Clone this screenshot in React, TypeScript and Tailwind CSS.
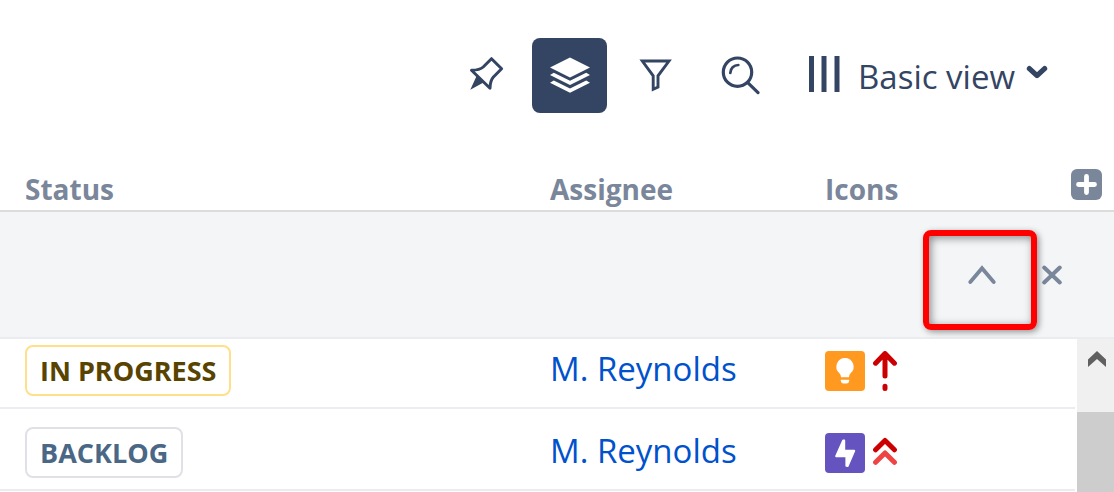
import type { ReactNode } from 'react'

type Kind = 'idea' | 'epic'

interface Issue {
  id: string
  status: string
  badgeClass: string
  assignee: string
  kind: Kind
}

const ISSUES: Issue[] = [
  { id: '1', status: 'IN PROGRESS', badgeClass: 'border-[#ffe08a] text-[#594300]', assignee: 'M. Reynolds', kind: 'idea' },
  { id: '2', status: 'BACKLOG', badgeClass: 'border-[#dfe1e6] text-[#4a6785]', assignee: 'M. Reynolds', kind: 'epic' },
]

function PinIcon() {
  return (
    <svg width="40" height="40" viewBox="0 0 40 40" fill="none">
      <path d="M6.5 14.2Q14.5 14.3 18.2 11L26.5 2.7L36.6 12.7L28.2 21.2Q25.2 24.5 25 32.3Z" stroke="currentColor" strokeWidth="3" strokeLinejoin="round" />
      <path d="M11.8 19.5L18.5 26.5L5.3 33.7Z" fill="currentColor" />
    </svg>
  )
}

function LayersIcon() {
  return (
    <svg width="40" height="38" viewBox="0 0 40 38" fill="currentColor">
      <path d="M20 .4L40 10.4L20 20.4L0 10.4Z" />
      <path d="M0 18L3.8 15.8L20 23.8L36.2 15.8L40 18L20 28Z" />
      <path d="M0 25.7L3.8 23.4L20 31.5L36.2 23.4L40 25.7L20 35.8Z" />
    </svg>
  )
}

function FilterIcon() {
  return (
    <svg width="40" height="40" viewBox="0 0 40 40" fill="none">
      <path d="M7.3 5H34L23 19.8V31L18.2 33.3V19.8Z" stroke="currentColor" strokeWidth="2.9" />
    </svg>
  )
}

function SearchIcon() {
  return (
    <svg width="40" height="40" viewBox="0 0 40 40" fill="none" stroke="currentColor" strokeWidth="3.2" strokeLinecap="round">
      <circle cx="17.5" cy="16.2" r="14.2" />
      <path d="M10.3 16.9A8 8 0 0 1 18.3 9" strokeWidth="2.7" />
      <path d="M28 26.8L38 36.6" />
    </svg>
  )
}

function IdeaIcons() {
  return (
    <>
      <svg width="40" height="40" viewBox="0 0 40 40">
        <rect width="40" height="40" rx="4" fill="#ff991f" />
        <path d="M20 7A8.7 8.7 0 0 0 14.4 22.3Q16 23.8 16 26.2H24Q24 23.8 25.6 22.3A8.7 8.7 0 0 0 20 7Z" fill="#fff" />
        <path d="M15.8 28.8H24.2V29.5Q24 32.5 21.5 32.5H18.5Q16 32.5 15.8 29.5Z" fill="#fff" />
      </svg>
      <svg width="24" height="40" viewBox="0 0 24 40" fill="none" stroke="#cc0000" strokeWidth="5" strokeLinecap="round" strokeLinejoin="round">
        <path d="M2.6 12.2L12 2.6L21.4 12.2M12 3.5V25M12 35.2V37.4" />
      </svg>
    </>
  )
}

function EpicIcons() {
  return (
    <>
      <svg width="40" height="40" viewBox="0 0 40 40">
        <rect width="40" height="40" rx="4" fill="#6554c0" />
        <path d="M18.2 7.4L19.2 7.6V17.8H29.2L22.6 33L21.4 32.8V23.2H11.2Z" fill="#fff" stroke="#fff" strokeWidth="2" strokeLinejoin="round" />
      </svg>
      <svg width="24" height="40" viewBox="0 0 24 40" fill="none" strokeWidth="5" strokeLinecap="round" strokeLinejoin="round">
        <path d="M2.6 29.3L12 20L21.4 29.3" stroke="#ef4444" />
        <path d="M2.6 16.8L12 7.4L21.4 16.8" stroke="#cc0000" />
      </svg>
    </>
  )
}

function ToolButton({ label, active, children }: { label: string; active?: boolean; children: ReactNode }) {
  return (
    <button
      type="button"
      aria-label={label}
      className={`flex size-[75px] items-center justify-center rounded-lg ${active ? 'bg-[#344563] text-white' : 'text-[#344563]'}`}
    >
      {children}
    </button>
  )
}

function Toolbar() {
  return (
    <div className="flex items-center justify-end gap-[10px] pt-[38px] pr-[66px] text-[#344563]">
      <ToolButton label="Pin"><PinIcon /></ToolButton>
      <ToolButton label="Group" active><LayersIcon /></ToolButton>
      <ToolButton label="Filter"><FilterIcon /></ToolButton>
      <ToolButton label="Search"><SearchIcon /></ToolButton>
      <label className="flex items-center pl-[22px]">
        <svg width="31" height="40" viewBox="0 0 31 40" fill="currentColor" className="mr-[18px]">
          <rect width="5" height="36" />
          <rect x="12.5" width="5" height="36" />
          <rect x="25.5" width="5" height="36" />
        </svg>
        <select aria-label="View" className="appearance-none bg-transparent pt-[3px] text-[33px] leading-[44px]">
          <option>Basic view</option>
        </select>
        <svg width="22" height="14" viewBox="0 0 22 14" fill="none" className="mb-2 ml-[10px]">
          <path d="M3.4 3.6L11 10.6L18.6 3.6" stroke="currentColor" strokeWidth="5.2" strokeLinecap="round" strokeLinejoin="round" />
        </svg>
      </label>
    </div>
  )
}

function GroupBar() {
  return (
    <div className="flex h-[127px] justify-end border-b-2 border-[#ebecf0] bg-[#f4f5f7] pr-[51px] text-[#7a869a]">
      <button type="button" aria-label="Collapse" className="relative flex w-[118px] items-center justify-center">
        <svg width="28" height="20" viewBox="0 0 28 20" fill="none">
          <path d="M2.3 17L14 3.2L25.7 17" stroke="currentColor" strokeWidth="3.8" strokeLinecap="round" />
        </svg>
        <span className="absolute top-[18px] right-1 bottom-[7px] left-0 rounded-lg border-6 border-[#ff0000] shadow-[2px_2px_6px_rgba(0,0,0,0.4),inset_2px_2px_8px_rgba(0,0,0,0.45)]" />
      </button>
      <button type="button" aria-label="Close" className="flex items-center">
        <svg width="22" height="20" viewBox="0 0 22 20" fill="none">
          <path d="M3.2 2.5L18.8 17.5M18.8 2.5L3.2 17.5" stroke="currentColor" strokeWidth="3.9" strokeLinecap="round" />
        </svg>
      </button>
    </div>
  )
}

function Scrollbar() {
  return (
    <div className="flex w-[37px] shrink-0 flex-col bg-[#f0f0f0]">
      <button type="button" aria-label="Scroll up" className="flex h-[73px] justify-center pt-3 pl-[2px]">
        <svg width="18" height="16" viewBox="0 0 18 16" fill="#606060">
          <path d="M9 0L18 8.5V16L9 8L0 16V8.5Z" />
        </svg>
      </button>
      <div className="flex-1 bg-[#cdcdcd]" />
    </div>
  )
}

export default function App() {
  return (
    <div className="flex min-h-screen flex-col bg-white font-['Open_Sans','Noto_Sans',sans-serif]">
      <Toolbar />

      <table className="w-full table-fixed border-collapse text-left text-[28px] leading-10 text-[#7a869a]">
        <thead>
          <tr className="h-[98px] border-b-2 border-[#dcdcdc] align-bottom">
            <th className="pb-px pl-[25px] font-bold">Status</th>
            <th className="w-[275px] pb-px pl-[25px] font-bold">Assignee</th>
            <th className="w-[314px] pr-3 pb-px pl-[25px] font-bold">
              <div className="flex items-start justify-between">
                Icons
                <button type="button" aria-label="Add column">
                  <svg width="31" height="31" viewBox="0 0 31 31">
                    <rect width="31" height="31" rx="6" fill="#7a869a" />
                    <path d="M15.5 7.5V23.5M7.5 15.5H23.5" stroke="#fff" strokeWidth="4.8" strokeLinecap="round" />
                  </svg>
                </button>
              </div>
            </th>
          </tr>
        </thead>
      </table>

      <GroupBar />

      {/* the list is scrolled a little, so the first row is cut at its top */}
      <div className="flex flex-1 overflow-hidden">
        <div className="mr-[2px] min-w-0 flex-1">
          <table className="-mt-3 w-full table-fixed border-separate border-spacing-0">
            <tbody>
              {ISSUES.map((issue) => (
                <tr key={issue.id} className="h-[82px]">
                  <td className="border-b-2 border-[#ebecf0] pt-1.5 pl-[25px]">
                    <span className={`inline-block rounded-lg border-2 px-[13px] align-middle text-[27px] leading-[47px] font-bold ${issue.badgeClass}`}>
                      {issue.status}
                    </span>
                  </td>
                  <td className="w-[275px] border-b-2 border-[#ebecf0] pt-1 pl-[25px]">
                    <a href="#" className="text-[33px] leading-[44px] text-[#0052cc]">{issue.assignee}</a>
                  </td>
                  <td className="w-[275px] border-b-2 border-[#ebecf0] pt-2 pl-[25px]">
                    <div className="flex gap-2">{issue.kind === 'idea' ? <IdeaIcons /> : <EpicIcons />}</div>
                  </td>
                </tr>
              ))}
            </tbody>
          </table>
        </div>
        <Scrollbar />
      </div>
    </div>
  )
}
